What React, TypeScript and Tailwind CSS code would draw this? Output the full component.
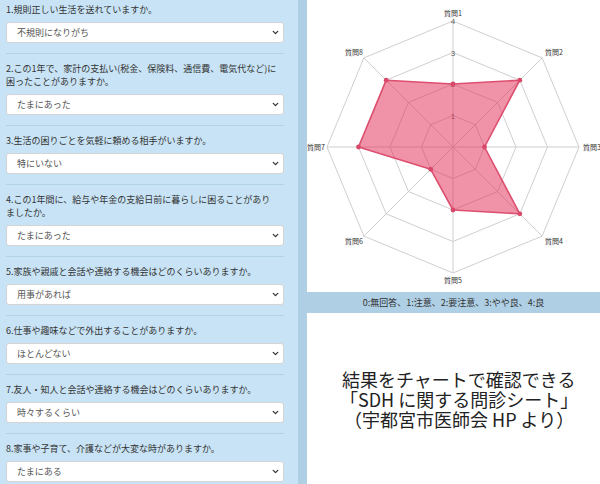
import { ChevronDown } from 'lucide-react';

type Question = { lines: string[]; answer: string };

const questions: Question[] = [
  { lines: ['1.規則正しい生活を送れていますか。'], answer: '不規則になりがち' },
  {
    lines: ['2.この1年で、家計の支払い(税金、保険料、通信費、電気代など)に', '困ったことがありますか。'],
    answer: 'たまにあった',
  },
  { lines: ['3.生活の困りごとを気軽に頼める相手がいますか。'], answer: '特にいない' },
  {
    lines: ['4.この1年間に、給与や年金の支給日前に暮らしに困ることがあり', 'ましたか。'],
    answer: 'たまにあった',
  },
  { lines: ['5.家族や親戚と会話や連絡する機会はどのくらいありますか。'], answer: '用事があれば' },
  { lines: ['6.仕事や趣味などで外出することがありますか。'], answer: 'ほとんどない' },
  { lines: ['7.友人・知人と会話や連絡する機会はどのくらいありますか。'], answer: '時々するくらい' },
  { lines: ['8.家事や子育て、介護などが大変な時がありますか。'], answer: 'たまにある' },
];

// radar values for 質問1..8 (0-4)
const scores = [2, 3, 1, 3, 2, 1, 3, 3];

const CX = 146;
const CY = 147;
const R = 126;

function pt(i: number, r: number) {
  const a = -Math.PI / 2 + (i * Math.PI) / 4;
  return [CX + r * Math.cos(a), CY + r * Math.sin(a)];
}

function ring(r: number) {
  return Array.from({ length: 8 }, (_, i) => pt(i, r).join(',')).join(' ');
}

const labels: { text: string; x: number; y: number; anchor: 'start' | 'middle' | 'end' }[] = [
  { text: '質問1', x: 146, y: 16, anchor: 'middle' },
  { text: '質問2', x: 238, y: 55, anchor: 'start' },
  { text: '質問3', x: 276, y: 150, anchor: 'start' },
  { text: '質問4', x: 238, y: 244, anchor: 'start' },
  { text: '質問5', x: 146, y: 283, anchor: 'middle' },
  { text: '質問6', x: 56, y: 244, anchor: 'end' },
  { text: '質問7', x: 0, y: 150, anchor: 'start' },
  { text: '質問8', x: 56, y: 55, anchor: 'end' },
];

function RadarChart() {
  const data = scores.map((v, i) => pt(i, (v / 4) * R));
  return (
    <svg width="293" height="292" viewBox="0 0 293 292">
      {[1, 2, 3, 4].map((s) => (
        <polygon key={s} points={ring((s / 4) * R)} fill="none" stroke="#cfcfcf" strokeWidth="1" />
      ))}
      {Array.from({ length: 8 }, (_, i) => {
        const [x, y] = pt(i, R);
        return <line key={i} x1={CX} y1={CY} x2={x} y2={y} stroke="#cfcfcf" strokeWidth="1" />;
      })}
      {[1, 2, 3, 4].map((s) => (
        <text
          key={s}
          x={CX}
          y={CY - (s / 4) * R + 3}
          textAnchor="middle"
          fontSize="8"
          fill="#666"
          fontFamily="Liberation Sans, sans-serif"
        >
          {s}
        </text>
      ))}
      <polygon
        points={data.map((p) => p.join(',')).join(' ')}
        fill="rgba(226,48,88,0.52)"
        stroke="#dd4f6e"
        strokeWidth="1.6"
        strokeLinejoin="round"
      />
      {data.map(([x, y], i) => (
        <circle key={i} cx={x} cy={y} r="2.4" fill="#d9486a" />
      ))}
      {labels.map((l) => (
        <text
          key={l.text}
          x={l.x}
          y={l.y}
          textAnchor={l.anchor}
          fontSize="7"
          fill="#333"
          fontFamily="Noto Sans CJK JP, sans-serif"
        >
          {l.text}
        </text>
      ))}
    </svg>
  );
}

export default function App() {
  return (
    <div className="w-[600px] h-[484px] overflow-hidden flex bg-white font-['Noto_Sans_CJK_JP',sans-serif]">
      <div className="w-[298px] shrink-0 bg-[#c8e3f5] pl-[6px] pr-[14px]">
        {questions.map((q, i) => (
          <div
            key={i}
            className={`${i === 0 ? 'pt-[3px]' : 'pt-[8px]'} pb-[10px] border-b border-[#b2d2e8]`}
          >
            <p className="text-[9px] leading-[13px] text-[#333] whitespace-nowrap">
              {q.lines.map((line, j) => (
                <span key={j} className="block">
                  {line}
                </span>
              ))}
            </p>
            <div className="relative mt-[6px]">
              <select
                defaultValue={q.answer}
                className="block appearance-none w-full h-[21px] bg-white border border-[#d4d4d4] rounded-[3px] pl-[10px] text-[9px] text-[#555] outline-none"
              >
                <option>{q.answer}</option>
              </select>
              <ChevronDown
                size={9}
                strokeWidth={3.5}
                className="absolute right-[4px] top-[6px] text-[#333] pointer-events-none"
              />
            </div>
          </div>
        ))}
      </div>
      <div className="w-[9px] shrink-0 bg-[#afcfe5]" />
      <div className="flex-1 flex flex-col">
        <div className="h-[292px] bg-white">
          <RadarChart />
        </div>
        <div className="h-[21px] bg-[#afcfe5] flex items-center justify-center text-[9px] text-[#333]">
          0:無回答、1:注意、2:要注意、3:やや良、4:良
        </div>
        <div className="flex-1 flex flex-col justify-center pl-[35px] text-[18px] leading-[20px] text-[#222]">
          <p>結果をチャートで確認できる</p>
          <p className="-ml-[2px]">「SDH に関する問診シート」</p>
          <p className="ml-[2px]">（宇都宮市医師会 HP より）</p>
        </div>
      </div>
    </div>
  );
}
